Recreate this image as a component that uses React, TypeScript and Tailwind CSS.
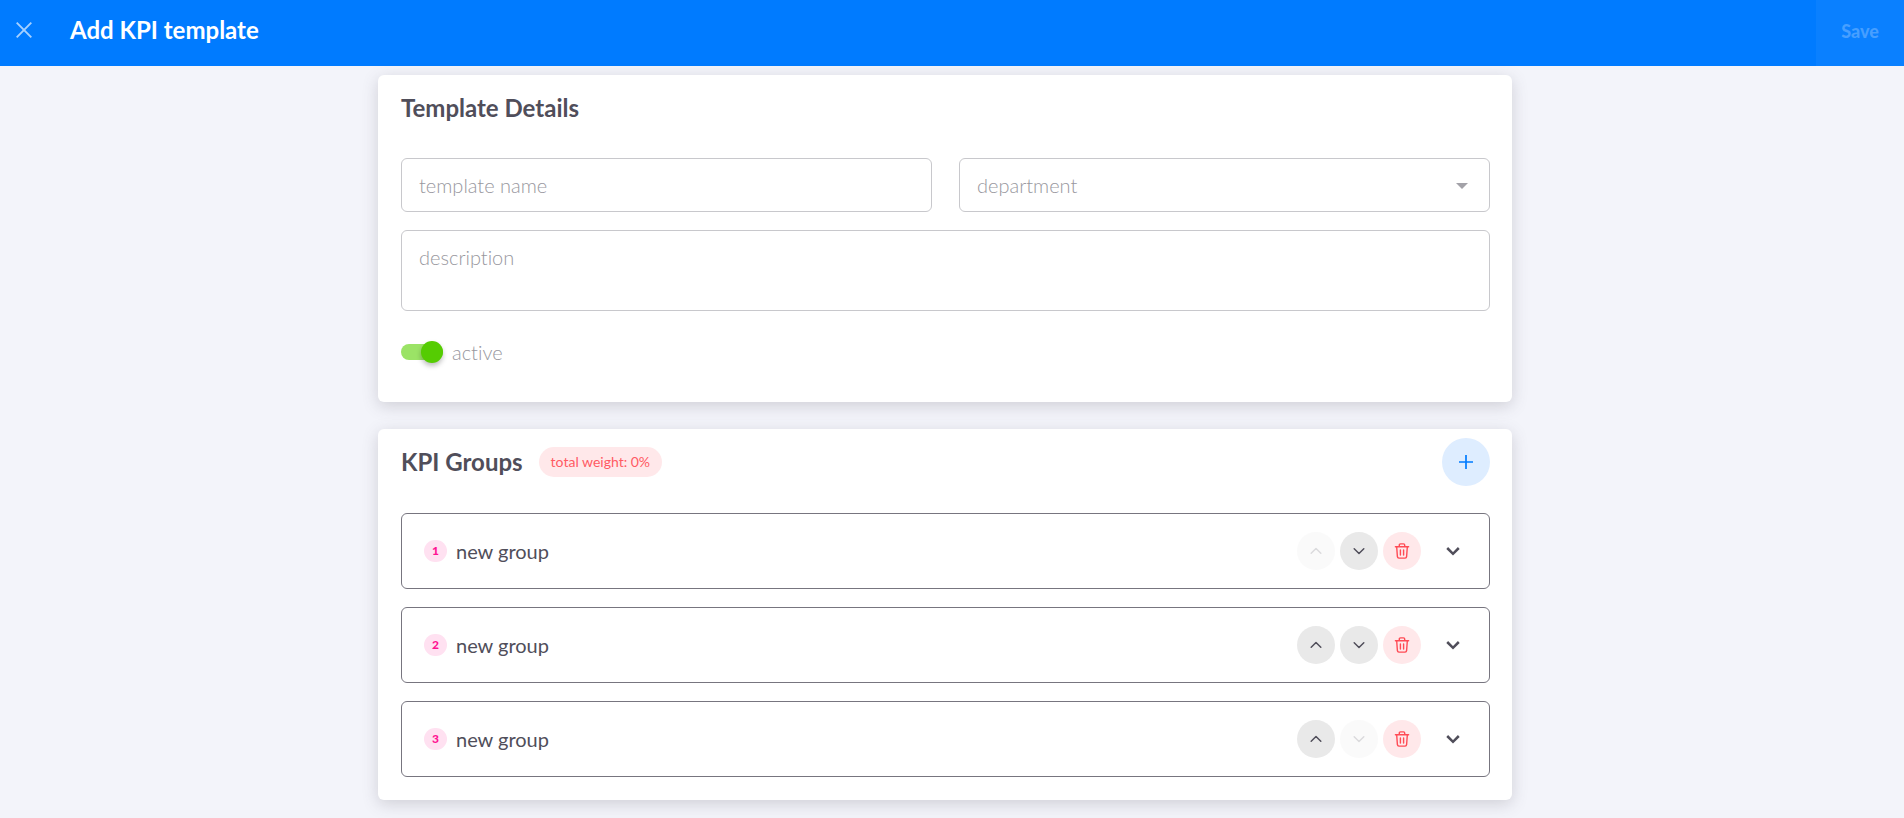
import { useState } from "react";
import type { ReactNode } from "react";
import clsx from "clsx";

type Group = { id: number; name: string };

const INITIAL_GROUPS: Group[] = [
  { id: 1, name: "new group" },
  { id: 2, name: "new group" },
  { id: 3, name: "new group" },
];

function ChevronIcon({ up, bold }: { up?: boolean; bold?: boolean }) {
  return (
    <svg
      viewBox="0 0 16 16"
      className={clsx("size-4", up && "rotate-180")}
      fill="none"
      stroke="currentColor"
      strokeWidth={bold ? 2.5 : 1.5}
      strokeLinecap={bold ? "butt" : "round"}
      strokeLinejoin={bold ? "miter" : "round"}
    >
      <path d={bold ? "M2.2 5 8 10.800 13.800 5" : "M3.200 5.800 8 10.500 12.800 5.800"} />
    </svg>
  );
}

function TrashIcon() {
  return (
    <svg
      viewBox="0 0 16 16"
      className="size-4"
      fill="none"
      stroke="currentColor"
      strokeWidth="1.4"
      strokeLinecap="round"
      strokeLinejoin="round"
    >
      <path d="M1.400 3.800h13.200M5.300 3.600V2.100c0-.8.4-1.200 1.200-1.200h3c.8 0 1.200.4 1.200 1.200v1.500M2.700 4l.7 9.700c.1.900.6 1.400 1.500 1.400h6.200c.9 0 1.400-.5 1.500-1.400l.7-9.700M6.400 7v5M9.600 7v5" />
    </svg>
  );
}

function Card({ children }: { children: ReactNode }) {
  return (
    <section className="rounded-md bg-white pr-[22px] pl-[23px] shadow-[0_4px_16px_rgba(80,78,90,0.22)]">
      {children}
    </section>
  );
}

type RoundButtonProps = {
  label: string;
  danger?: boolean;
  disabled?: boolean;
  onClick?: () => void;
  children: ReactNode;
};

function RoundButton({ label, danger, disabled, onClick, children }: RoundButtonProps) {
  return (
    <button
      type="button"
      aria-label={label}
      disabled={disabled}
      onClick={onClick}
      className={clsx(
        "flex size-[38px] items-center justify-center rounded-full disabled:opacity-20",
        danger ? "bg-[#ffe8ea] text-[#ff4b55]" : "bg-[#e9e9e9] text-[#504e5a]",
      )}
    >
      {children}
    </button>
  );
}

export default function App() {
  const [groups, setGroups] = useState(INITIAL_GROUPS);
  const [active, setActive] = useState(true);

  const move = (from: number, to: number) => {
    const next = [...groups];
    const [item] = next.splice(from, 1);
    next.splice(to, 0, item);
    setGroups(next);
  };

  const addGroup = () =>
    setGroups([...groups, { id: Date.now(), name: "new group" }]);

  const removeGroup = (id: number) =>
    setGroups(groups.filter((g) => g.id !== id));

  return (
    <div className="min-h-screen bg-[#f3f4fa] font-['Lato','Open_Sans',sans-serif] text-[#504e5a] [font-variant-ligatures:none]">
      <header className="flex h-[66px] bg-[#007bff] text-white">
        <button
          type="button"
          aria-label="Close"
          className="flex h-[60px] w-12 items-center justify-center opacity-65"
        >
          <svg viewBox="0 0 16 16" className="size-4" stroke="currentColor" strokeWidth="1.900">
            <path d="M.7.7l14.600 14.600M15.300.7.7 15.300" />
          </svg>
        </button>
        <h1 className="ml-[22px] text-2xl leading-[60px] font-bold">Add KPI template</h1>
        <button
          type="button"
          disabled
          className="ml-auto w-[88px] bg-white/4 pb-1 text-lg font-black text-white/25"
        >
          Save
        </button>
      </header>

      <main className="pt-[9px] pr-3.5 pb-[18px]">
        <div className="mx-auto flex w-3/5 flex-col gap-[27px]">
          <Card>
            <h2 className="pt-[17px] pb-[34px] text-2xl font-bold">Template Details</h2>
            <div className="grid grid-cols-2 gap-x-[27px] gap-y-[18px]">
              <input
                type="text"
                aria-label="template name"
                placeholder="template name"
                className="h-[54px] rounded-md border border-[#c8c8cc] px-[17px] text-xl font-light placeholder:text-[#98979e]"
              />
              <div className="relative">
                <select
                  aria-label="department"
                  defaultValue=""
                  className="h-[54px] w-full appearance-none rounded-md border border-[#c8c8cc] bg-white px-[17px] text-xl font-light text-[#98979e]"
                >
                  <option value="">department</option>
                </select>
                <svg
                  viewBox="0 0 12 6"
                  className="pointer-events-none absolute top-[25px] right-[22px] h-1.5 w-3 fill-[#a3a2a8]"
                >
                  <path d="M0 0h12L6 6z" />
                </svg>
              </div>
              <textarea
                aria-label="description"
                placeholder="description"
                className="col-span-2 h-[81px] resize-none rounded-md border border-[#c8c8cc] px-[17px] pt-3 text-xl font-light placeholder:text-[#98979e]"
              />
            </div>
            <label className="flex w-fit items-center gap-[9px] pt-[27px] pb-9 text-xl font-light text-[#98979e]">
              <input
                type="checkbox"
                checked={active}
                onChange={(e) => setActive(e.target.checked)}
                className="peer sr-only"
              />
              <span className="flex h-4 w-[42px] items-center rounded-full bg-[#c8c8cc] peer-checked:justify-end peer-checked:bg-[#9be366] peer-checked:[&>span]:bg-[#55cc02]">
                <span className="size-[22px] rounded-full bg-white shadow-[0_3px_5px_rgba(0,0,0,0.25)]" />
              </span>
              active
            </label>
          </Card>

          <Card>
            <div className="flex items-center pt-[9px]">
              <h2 className="text-2xl font-bold">KPI Groups</h2>
              <span className="ml-4 rounded-full bg-[#ffe8ea] px-3 py-[5px] text-sm leading-5 text-[#ff5a63]">
                total weight: 0%
              </span>
              <button
                type="button"
                aria-label="Add group"
                onClick={addGroup}
                className="ml-auto flex size-12 items-center justify-center rounded-full bg-[#deedff] text-[#007bff]"
              >
                <svg viewBox="0 0 14 14" className="size-3.5" stroke="currentColor" strokeWidth="1.700">
                  <path d="M7 0v14M0 7h14" />
                </svg>
              </button>
            </div>
            <ul className="flex flex-col gap-[18px] pt-[27px] pb-[23px]">
              {groups.map((group, i) => (
                <li
                  key={group.id}
                  className="flex h-[76px] items-center rounded-md border border-[#77757f] pr-7 pl-[22px]"
                >
                  <span className="flex h-[22px] items-center justify-center rounded-full bg-[#ffe1f1] px-2 text-xs font-black text-[#ff1493]">
                    {i + 1}
                  </span>
                  <span className="ml-[9px] text-xl">{group.name}</span>
                  <div className="ml-auto flex items-center gap-[5px]">
                    <RoundButton label="Move up" disabled={i === 0} onClick={() => move(i, i - 1)}>
                      <ChevronIcon up />
                    </RoundButton>
                    <RoundButton
                      label="Move down"
                      disabled={i === groups.length - 1}
                      onClick={() => move(i, i + 1)}
                    >
                      <ChevronIcon />
                    </RoundButton>
                    <RoundButton label="Delete group" danger onClick={() => removeGroup(group.id)}>
                      <TrashIcon />
                    </RoundButton>
                  </div>
                  <button type="button" aria-label="Expand group" className="ml-6">
                    <ChevronIcon bold />
                  </button>
                </li>
              ))}
            </ul>
          </Card>
        </div>
      </main>
    </div>
  );
}
